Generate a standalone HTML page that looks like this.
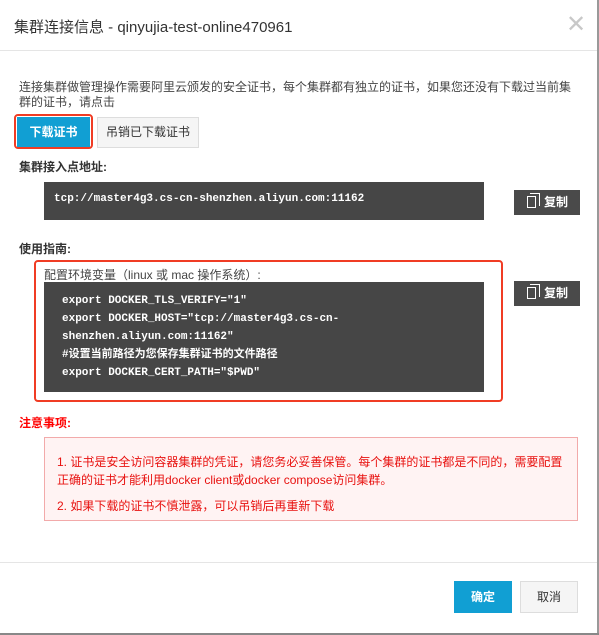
<!DOCTYPE html><html><head><meta charset="utf-8"><style>
*{margin:0;padding:0;box-sizing:border-box}
body{width:599px;height:635px;background:#fff;position:relative;overflow:hidden;font-family:"Liberation Sans","Noto Sans CJK SC",sans-serif;font-size:12px;color:#333}
.a{position:absolute;white-space:nowrap}
.mono{font-family:"Liberation Mono","Noto Sans CJK SC",monospace;font-weight:bold;color:#fff;font-size:11px}
.dark{background:#464646;position:absolute}
.copy{position:absolute;left:514px;width:66px;height:25px;background:#4a4a4a;color:#fff;font-weight:bold;font-size:12px;line-height:25px}
.copy i{position:absolute;left:13px;top:6px;width:9px;height:12px;border:1px solid #fff;background:#4a4a4a}
.copy i:before{content:"";position:absolute;left:2px;top:-4px;width:9px;height:12px;border-top:1px solid #fff;border-right:1px solid #fff}
.copy span{position:absolute;left:30px}
</style></head><body>
<div class="a" style="left:14px;top:16px;font-size:15px;color:#333">集群连接信息 - qinyujia-test-online470961</div>
<div class="a" style="left:566px;top:10px;font-size:24px;color:#c8c8c8;font-weight:300">✕</div>
<div class="a" style="left:0;top:50px;width:599px;height:1px;background:#e5e5e5"></div>
<div class="a" style="left:19px;top:80px;line-height:15px;color:#444">连接集群做管理操作需要阿里云颁发的安全证书，每个集群都有独立的证书，如果您还没有下载过当前集<br>群的证书，请点击</div>
<div class="a" style="left:14px;top:114px;width:79px;height:35px;border:2px solid #f03c24;border-radius:4px"></div>
<div class="a" style="left:17px;top:117px;width:73px;height:30px;background:#119fd3;color:#fff;font-weight:bold;text-align:center;line-height:30px">下载证书</div>
<div class="a" style="left:97px;top:117px;width:102px;height:31px;background:#f5f5f5;border:1px solid #ddd;text-align:center;line-height:29px;color:#333">吊销已下载证书</div>
<div class="a" style="left:19px;top:158px;font-weight:bold;color:#333">集群接入点地址:</div>
<div class="dark" style="left:44px;top:182px;width:440px;height:38px"></div>
<div class="a mono" style="left:54px;top:193px">tcp://master4g3.cs-cn-shenzhen.aliyun.com:11162</div>
<div class="copy" style="top:190px"><i></i><span>复制</span></div>
<div class="a" style="left:19px;top:240px;font-weight:bold;color:#333">使用指南:</div>
<div class="a" style="left:34px;top:260px;width:469px;height:142px;border:2px solid #f03c24;border-radius:4px"></div>
<div class="a" style="left:44px;top:266px;color:#444">配置环境变量（linux 或 mac 操作系统）:</div>
<div class="dark" style="left:44px;top:282px;width:440px;height:110px"></div>
<div class="a mono" style="left:62px;top:292px;line-height:18px">export DOCKER_TLS_VERIFY="1"<br>export DOCKER_HOST="tcp://master4g3.cs-cn-<br>shenzhen.aliyun.com:11162"<br>#设置当前路径为您保存集群证书的文件路径<br>export DOCKER_CERT_PATH="$PWD"</div>
<div class="copy" style="top:281px"><i></i><span>复制</span></div>
<div class="a" style="left:19px;top:414px;font-weight:bold;color:#f00">注意事项:</div>
<div class="a" style="left:44px;top:437px;width:534px;height:84px;background:#fff3f3;border:1px solid #f2aaaa"></div>
<div class="a" style="left:57px;top:453px;color:#e8110f;line-height:18px">1. 证书是安全访问容器集群的凭证，请您务必妥善保管。每个集群的证书都是不同的，需要配置<br>正确的证书才能利用docker client或docker compose访问集群。</div>
<div class="a" style="left:57px;top:497px;color:#e8110f">2. 如果下载的证书不慎泄露，可以吊销后再重新下载</div>
<div class="a" style="left:0;top:562px;width:599px;height:1px;background:#e5e5e5"></div>
<div class="a" style="left:454px;top:581px;width:58px;height:32px;background:#119fd3;color:#fff;font-weight:bold;text-align:center;line-height:32px">确定</div>
<div class="a" style="left:520px;top:581px;width:58px;height:32px;background:#f5f5f5;border:1px solid #ddd;text-align:center;line-height:30px">取消</div>
<div class="a" style="left:597px;top:0;width:2px;height:635px;background:#999"></div>
<div class="a" style="left:0;top:633px;width:599px;height:2px;background:#888"></div>
</body></html>
